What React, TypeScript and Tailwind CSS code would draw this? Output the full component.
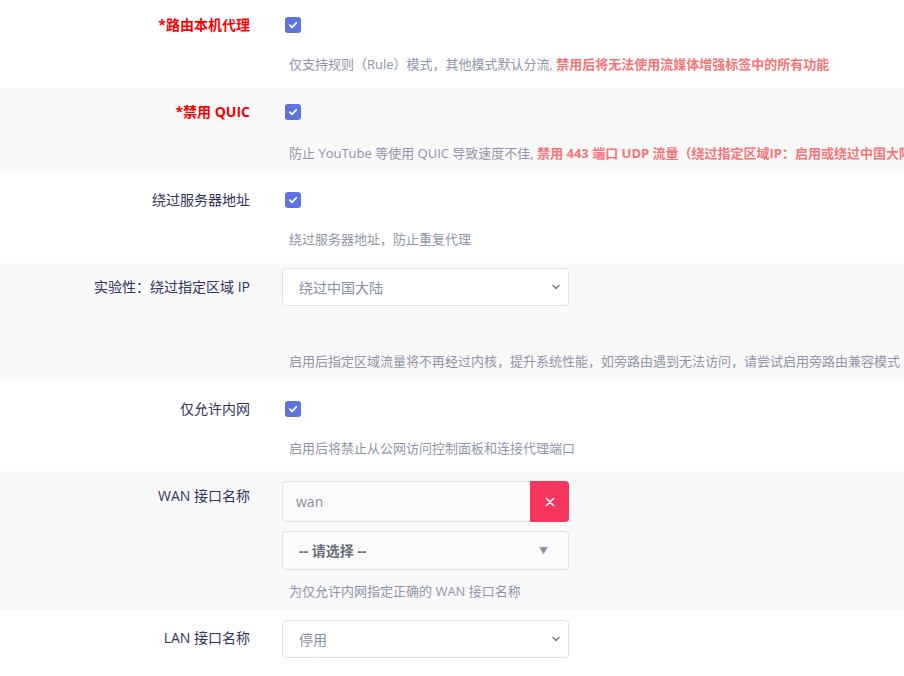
import React from "react";

const font = { fontFamily: '"Open Sans", "Noto Sans CJK SC", "Noto Sans", sans-serif' };

function Check() {
  return (
    <div className="ml-[3px] flex h-4 w-4 items-center justify-center rounded-[3px] bg-[#5e72e4]">
      <svg width="10" height="10" viewBox="0 0 10 10" fill="none">
        <path d="M1.8 5.2 L4 7.3 L8.3 2.8" stroke="white" strokeWidth="1.8" strokeLinecap="round" strokeLinejoin="round" />
      </svg>
    </div>
  );
}

function Chevron() {
  return (
    <svg width="10" height="10" viewBox="0 0 10 10" fill="none">
      <path d="M2 3.5 L5 6.5 L8 3.5" stroke="#7b8194" strokeWidth="1.6" strokeLinecap="round" strokeLinejoin="round" />
    </svg>
  );
}

function Select({ text, cls }: { text: string; cls: string }) {
  return (
    <div className={`flex w-[287px] items-center justify-between rounded-[4px] border border-[#dee2e6] bg-white pl-4 pr-[7px] text-[14px] text-[#8a8fa0] ${cls}`}>
      <span>{text}</span>
      <Chevron />
    </div>
  );
}

function Label({ text, red, cls }: { text: string; red?: boolean; cls: string }) {
  return (
    <div
      className={`w-[250px] shrink-0 text-right text-[14px] leading-[20px] ${red ? "font-bold text-[#ff0000]" : "text-[#32325d]"} ${cls}`}
    >
      {text}
    </div>
  );
}

function Desc({ children, cls }: { children: React.ReactNode; cls: string }) {
  return <div className={`whitespace-nowrap pl-[7px] text-[13px] leading-[20px] text-[#9295a8] ${cls}`}>{children}</div>;
}

export default function App() {
  return (
    <div className="w-[904px] h-[676px] overflow-hidden bg-white" style={font}>
      {/* Row 1 */}
      <div className="flex h-[88px] bg-white">
        <Label text="*路由本机代理" red cls="pt-[15px]" />
        <div className="ml-8 flex flex-col pt-[17px]">
          <Check />
          <Desc cls="mt-[21px]">
            仅支持规则（Rule）模式，其他模式默认分流,{" "}
            <span className="font-bold text-[#f87575]">禁用后将无法使用流媒体增强标签中的所有功能</span>
          </Desc>
        </div>
      </div>
      {/* Row 2 */}
      <div className="flex h-[83px] bg-[#f9f9fa]">
        <Label text="*禁用 QUIC" red cls="pt-[14px]" />
        <div className="ml-8 flex min-w-0 flex-col overflow-hidden pt-[16px]">
          <Check />
          <Desc cls="mt-[23px]">
            防止 YouTube 等使用 QUIC 导致速度不佳,{" "}
            <span className="font-bold text-[#f87575]">禁用 443 端口 UDP 流量（绕过指定区域IP：启用或绕过中国大陆时生效）</span>
          </Desc>
        </div>
      </div>
      {/* Row 3 */}
      <div className="flex h-[92px] bg-white">
        <Label text="绕过服务器地址" cls="pt-[19px]" />
        <div className="ml-8 flex flex-col pt-[21px]">
          <Check />
          <Desc cls="mt-[21px]">绕过服务器地址，防止重复代理</Desc>
        </div>
      </div>
      {/* Row 4 */}
      <div className="flex h-[117px] bg-[#f9f9fa]">
        <Label text="实验性：绕过指定区域 IP" cls="pt-[14px]" />
        <div className="ml-8 flex flex-col pt-[5px]">
          <Select text="绕过中国大陆" cls="h-[38px]" />
          <Desc cls="mt-[45px]">
            启用后指定区域流量将不再经过内核，提升系统性能，如旁路由遇到无法访问，请尝试启用旁路由兼容模式
          </Desc>
        </div>
      </div>
      {/* Row 5 */}
      <div className="flex h-[91px] bg-white">
        <Label text="仅允许内网" cls="pt-[19px]" />
        <div className="ml-8 flex flex-col pt-[21px]">
          <Check />
          <Desc cls="mt-[21px]">启用后将禁止从公网访问控制面板和连接代理端口</Desc>
        </div>
      </div>
      {/* Row 6 */}
      <div className="flex h-[139px] bg-[#f9f9fa]">
        <Label text="WAN 接口名称" cls="pt-[15px]" />
        <div className="ml-8 flex flex-col pt-[10px]">
          <div className="flex h-[41px] w-[287px]">
            <div className="flex flex-1 items-center rounded-l-[4px] border border-r-0 border-[#dee2e6] bg-[#fafafa] pl-[13px] text-[14px] text-[#8a8fa0]">
              wan
            </div>
            <div className="flex w-[39px] items-center justify-center rounded-r-[4px] bg-[#f5365c]">
              <svg width="10" height="10" viewBox="0 0 10 10" fill="none">
                <path d="M1.5 1.5 L8.5 8.5 M8.5 1.5 L1.5 8.5" stroke="white" strokeWidth="1.6" strokeLinecap="round" />
              </svg>
            </div>
          </div>
          <div className="mt-[9px] flex h-[39px] w-[287px] items-center justify-between rounded-[4px] border border-[#dee2e6] bg-[#fbfbfc] pl-4 pr-[20px] text-[14px]">
            <span className="font-bold text-[#6b6e7a]">-- 请选择 --</span>
            <span className="text-[9px] text-[#8a93a6]">▼</span>
          </div>
          <Desc cls="mt-[11px]">为仅允许内网指定正确的 WAN 接口名称</Desc>
        </div>
      </div>
      {/* Row 7 */}
      <div className="flex h-[66px] bg-white">
        <Label text="LAN 接口名称" cls="pt-[18px]" />
        <div className="ml-8 flex flex-col pt-[10px]">
          <Select text="停用" cls="h-[38px]" />
        </div>
      </div>
    </div>
  );
}
